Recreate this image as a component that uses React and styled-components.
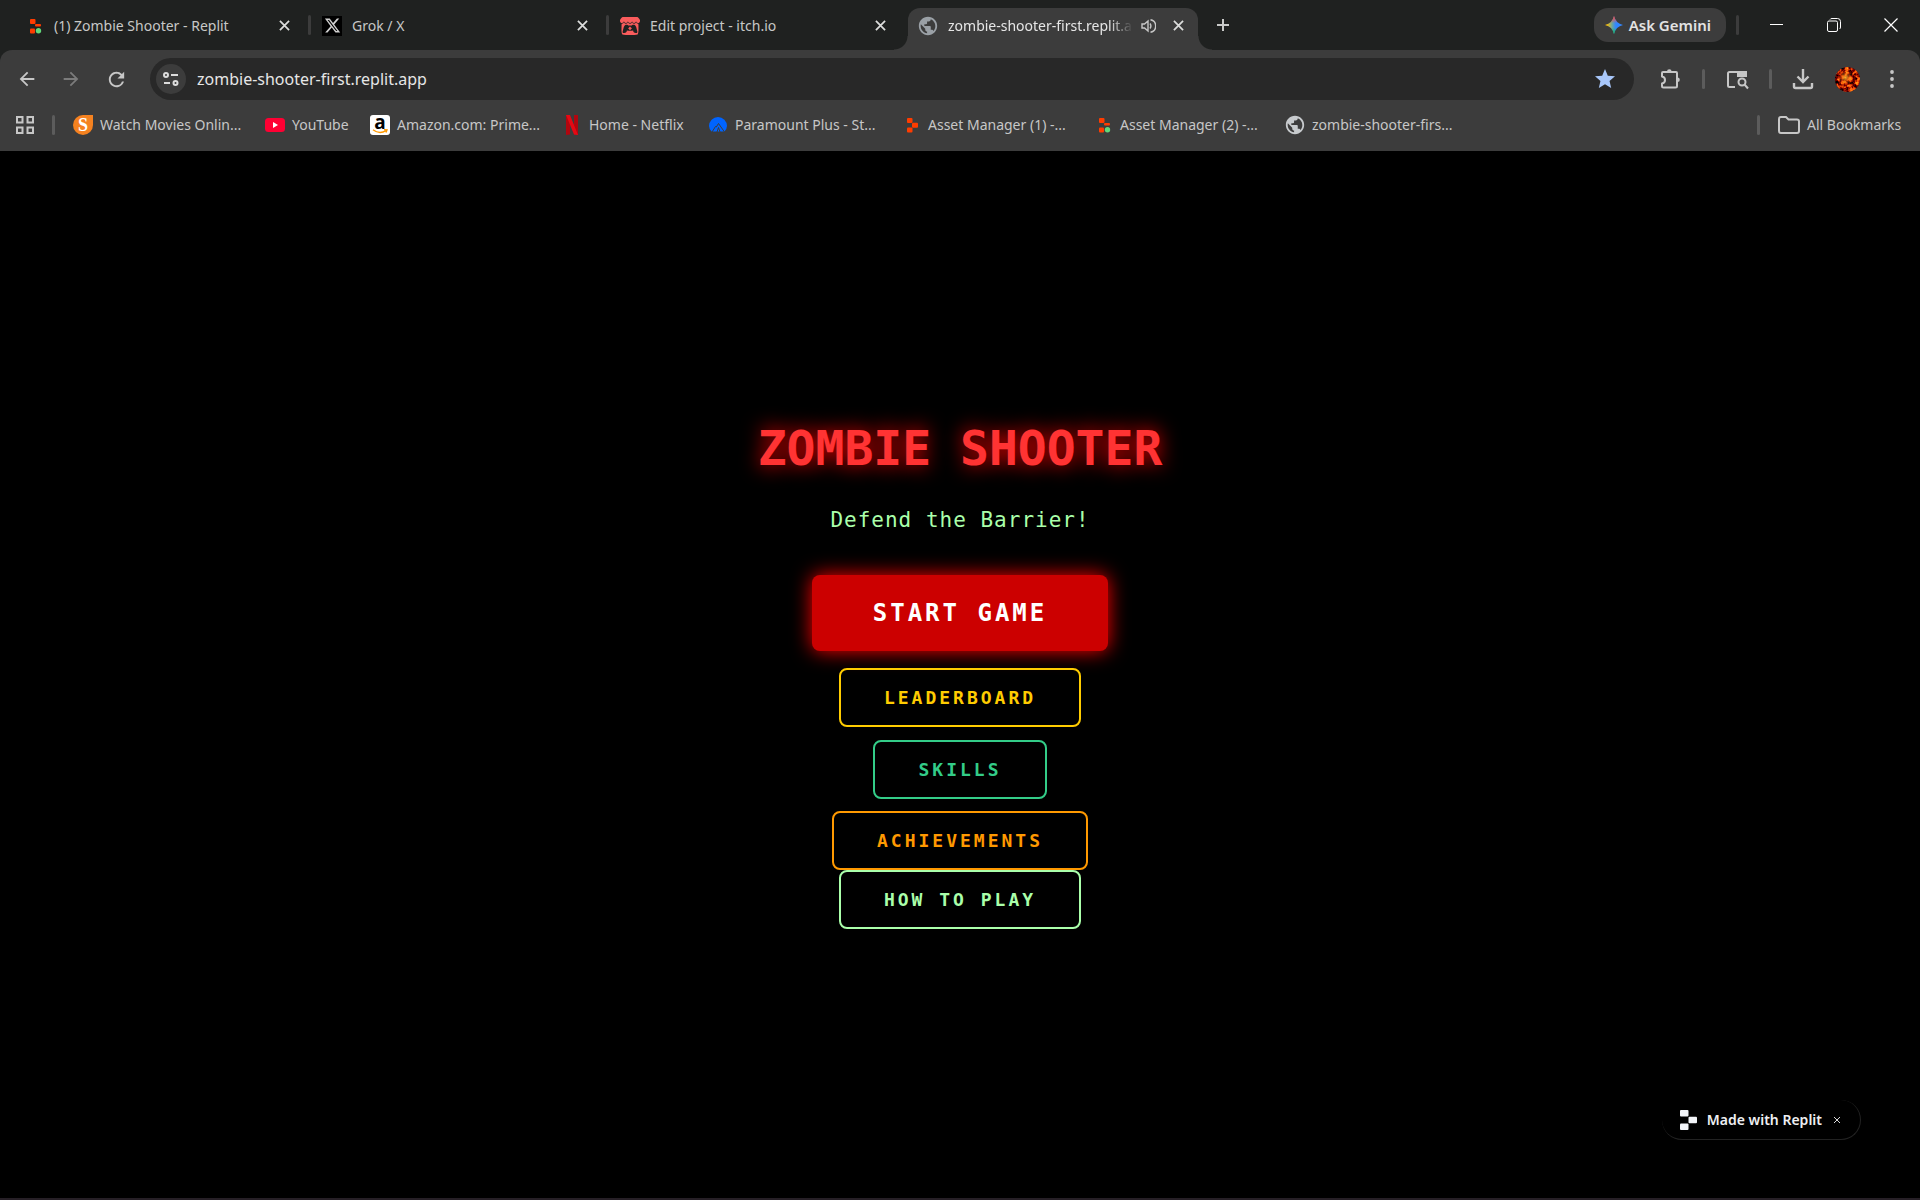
import styled,{createGlobalStyle} from 'styled-components'
import { useState } from 'react'
import { MdArrowBack, MdArrowForward, MdRefresh, MdStar, MdPublic } from 'react-icons/md'
import { SiItchdotio } from 'react-icons/si'
import { FaXTwitter } from 'react-icons/fa6'

export default function App(){
    const [ativa,setAtiva]=useState(3)
    const [url,setUrl]=useState('zombie-shooter-first.replit.app')
    const [selo,setSelo]=useState(true)
    return(
    <Tudo>
        <Global/>
        <Abas>
            {abas.map((a,i)=>
            <Vaga key={a.nome}>
                <Aba $ativa={i==ativa}>
                    <Titulo onClick={()=>setAtiva(i)}>
                        <Quadro>{a.icone}</Quadro>
                        <Nome $corta={a.som}>{a.nome}</Nome>
                    </Titulo>
                    {a.som?<Som/>:<></>}
                    <Botao $w={20} $h={20} aria-label='Close tab'><Fechar/></Botao>
                </Aba>
                {i<ativa-1?<Divisa/>:<></>}
            </Vaga>)}
            <Botao $w={34} $h={34} aria-label='New tab'>
                <svg width='14' height='14' viewBox='0 0 14 14' stroke='#c9cac9' strokeWidth='2'><path d='M7 1v12M1 7h12'/></svg>
            </Botao>
            <Janela>
                <Gemini><Brilho/>Ask Gemini</Gemini>
                <Risca/>
                <Botao $w={56} $h={50} aria-label='Minimize'>
                    <svg width='14' height='14' viewBox='0 0 14 14' stroke='#fff'><path d='M0 6.5h13'/></svg>
                </Botao>
                <Botao $w={57} $h={50} aria-label='Restore'>
                    <svg width='14' height='14' viewBox='0 0 14 14' fill='none' stroke='#fff'><rect x='.5' y='3' width='10' height='10.5' rx='1.5'/><path d='M3 1.5Q3.5.5 5 .5h5.5a3 3 0 0 1 3 3V9q0 1.5-1 2'/></svg>
                </Botao>
                <Botao $w={58} $h={50} aria-label='Close window'>
                    <svg width='14' height='14' viewBox='0 0 14 14' stroke='#fff' strokeWidth='1.2'><path d='M.5.5l13 13M13.5.5l-13 13'/></svg>
                </Botao>
            </Janela>
        </Abas>
        <Barra>
            <Botao $w={44} $h={42} aria-label='Back'><MdArrowBack size={22} color='#c7c7c7'/></Botao>
            <Botao $w={44} $h={42} aria-label='Forward'><MdArrowForward size={22} color='#7b7b7b'/></Botao>
            <Botao $w={46} $h={42} aria-label='Reload'><MdRefresh size={23} color='#c7c7c7'/></Botao>
            <Endereco>
                <Info aria-label='View site information'>
                    <svg width='16' height='16' viewBox='0 0 16 16' fill='none' stroke='#dcdcdc' strokeWidth='2'>
                        <circle cx='3' cy='4' r='2'/><path d='M8 4h7M1 12h6'/><circle cx='12.5' cy='12' r='2'/>
                    </svg>
                </Info>
                <input aria-label='Address' value={url} onChange={(e)=>setUrl(e.target.value)}/>
                <Botao $w={30} $h={30} aria-label='Edit bookmark'><MdStar size={24} color='#a8c7fa'/></Botao>
            </Endereco>
            <Acoes>
                <Botao $w={40} $h={40} aria-label='Extensions'>
                    <svg width='22' height='22' viewBox='0 0 22 22' fill='none' stroke='#c7c7c7' strokeWidth='2' strokeLinejoin='round'>
                        <path d='M4 4h13q1 0 1 1v13q0 1.5-1.500 1.500h-12Q3 19.5 3 18v-2.500q3-.5 3-3.500t-3-3.500V5q0-1 1-1z'/>
                        <path d='M8 3.5a2.300 2.300 0 0 1 4.600 0zM18.500 9.500a2.300 2.300 0 0 1 0 4.600z' fill='#c7c7c7' stroke='none'/>
                    </svg>
                </Botao>
                <Risca $clara/>
                <Botao $w={40} $h={40} aria-label='Side search'>
                    <svg width='24' height='22' viewBox='0 0 24 22' fill='none' stroke='#c7c7c7' strokeWidth='2'>
                        <path d='M10 19H4.5Q3 19 3 17.500v-12Q3 4 4.500 4h15Q21 4 21 5.500V9'/>
                        <path d='M13 4h8v4h-8z' fill='#c7c7c7'/><circle cx='17' cy='14' r='3.5'/><path d='M19.5 16.500l3.500 4'/>
                    </svg>
                </Botao>
                <Risca $clara/>
                <Botao $w={38} $h={40} aria-label='Downloads'>
                    <svg width='22' height='22' viewBox='0 0 22 22' fill='none' stroke='#c7c7c7' strokeWidth='2.4'>
                        <path d='M11 1v13M5.5 8.500L11 14l5.500-5.500M2 15v3.500Q2 20 3.500 20h15q1.500 0 1.500-1.500V15'/>
                    </svg>
                </Botao>
                <Botao $w={50} $h={40} aria-label='Profile'><Avatar/></Botao>
                <Botao $w={40} $h={40} aria-label='Menu'>
                    <svg width='4' height='18' viewBox='0 0 4 18' fill='#c7c7c7'><circle cx='2' cy='2' r='1.9'/><circle cx='2' cy='9' r='1.9'/><circle cx='2' cy='16' r='1.9'/></svg>
                </Botao>
            </Acoes>
        </Barra>
        <Favoritos>
            <Botao $w={20} $h={30} aria-label='Apps'>
                <svg width='18' height='18' viewBox='0 0 18 18' fill='none' stroke='#c7c7c7' strokeWidth='2'>
                    <path d='M1 1h5.500v5.500H1zM11.500 1H17v5.500h-5.500zM1 11.500h5.500V17H1zM11.500 11.500H17V17h-5.500z'/>
                </svg>
            </Botao>
            <Risca $clara/>
            <Lista>
                {favoritos.map(f=>
                <Favorito key={f.nome} href='#' $w={f.largura}>
                    <Quadro>{f.icone}</Quadro>
                    <span>{f.nome}</span>
                </Favorito>)}
            </Lista>
            <Risca $clara/>
            <Favorito href='#' $w={95}>
                <svg width='22' height='18' viewBox='0 0 22 18' fill='none' stroke='#c7c7c7' strokeWidth='2'>
                    <path d='M1 15V3Q1 1 3 1h5l2.500 2.500H19q2 0 2 2V15q0 2-2 2H3q-2 0-2-2z'/>
                </svg>
                <span>All Bookmarks</span>
            </Favorito>
        </Favoritos>
        <Jogo>
            <h1>ZOMBIE SHOOTER</h1>
            <p>Defend the Barrier!</p>
            <Iniciar>START GAME</Iniciar>
            {menus.map(m=><Opcao key={m.nome} $c={m.c} $m={m.m}>{m.nome}</Opcao>)}
            {selo?
            <Selo>
                <a href='#'>
                    <svg width='17' height='20' viewBox='0 0 17 20' fill='#f2f4f8'>
                        <rect width='8.5' height='6.5' rx='1'/><rect x='8.5' y='6.8' width='8.5' height='6.5' rx='1'/><rect y='13.4' width='8.5' height='6.6' rx='1'/>
                    </svg>
                    Made with Replit
                </a>
                <Botao $w={16} $h={20} aria-label='Dismiss' onClick={()=>setSelo(false)}>
                    <svg width='6' height='6' viewBox='0 0 6 6' stroke='#d8d8d8'><path d='M0 0l6 6M6 0L0 6'/></svg>
                </Botao>
            </Selo>:<></>}
        </Jogo>
    </Tudo>
)}

function Fechar(){
    return <svg width='11' height='11' viewBox='0 0 12 12' stroke='#dcdddc' strokeWidth='1.9'><path d='M1 1l10 10M11 1L1 11'/></svg>
}
function Som(){
    return(
    <svg width='15' height='14' viewBox='0 0 15 14' fill='none' stroke='#c7c7c7' strokeWidth='1.4'>
        <path d='M1 5h2.500L7 2v10L3.500 9H1z'/><path d='M9 4.500q1.800 2.500 0 5M9.500.8a6.300 6.300 0 0 1 0 12.400'/>
    </svg>
)}
function Replit({ponto}){
    return(
    <svg width='20' height='20' viewBox='-2 0 20 20' fill='#ff3c00'>
        <rect x='4' y='3' width='5.5' height='5' rx='1'/>
        {ponto?
        <><rect x='9' y='8' width='6' height='2.5' rx='1'/><rect x='4' y='12.5' width='5' height='5' rx='1'/><circle cx='12.5' cy='14.8' r='2.7' fill='#62d87a'/></>:
        <><rect x='9' y='7.7' width='6' height='5' rx='1'/><rect x='4' y='12.5' width='5.5' height='5' rx='1'/></>}
    </svg>
)}
function Youtube(){
    return <svg width='20' height='14' viewBox='0 0 20 14'><rect width='20' height='14' rx='3.5' fill='#ff0033'/><path d='M8 4l5 3-5 3z' fill='#fff'/></svg>
}
function Netflix(){
    return(
    <svg width='20' height='20' viewBox='0 0 20 20'>
        <path d='M4 0h4v19.500l-4 .5zM12 0h4v20l-4-.5z' fill='#b1060f'/>
        <path d='M4 0h4l8 20-4-.5z' fill='#e50914'/>
    </svg>
)}
function Paramount(){
    return(
    <svg width='20' height='20' viewBox='0 0 20 20'>
        <path d='M3.500 16.500Q1 13.500 1 11a9 9 0 0 1 18 0q0 2.500-2.500 5.500z' fill='#0064ff'/>
        <path d='M4 17l3.500-5.500.8.5L10.500 8.500l6 8.500M9 17l1.500-4.500L12 17' fill='none' stroke='#3c3c3c' strokeWidth='1'/>
    </svg>
)}
function Brilho(){
    return(
    <svg width='18' height='18' viewBox='0 0 18 18'>
        <defs>
            <linearGradient id='azul' x1='0' y1='0' x2='1' y2='0'><stop offset='.1' stopColor='#fbbc04'/><stop offset='.4' stopColor='#6aa5a0'/><stop offset='.6' stopColor='#3186ff'/></linearGradient>
            <linearGradient id='topo' x1='0' y1='0' x2='0' y2='1'><stop offset='.05' stopColor='#ff4641'/><stop offset='.4' stopColor='#ff4641' stopOpacity='0'/><stop offset='.65' stopColor='#0ebc5f' stopOpacity='0'/><stop offset='.95' stopColor='#0ebc5f'/></linearGradient>
        </defs>
        {['azul','topo'].map(g=><path key={g} fill={`url(#${g})`} d='M9 0Q10.700 7.300 18 9 10.700 10.700 9 18 7.300 10.700 0 9 7.300 7.300 9 0z'/>)}
    </svg>
)}
function Avatar(){
    return(
    <svg width='25' height='25' viewBox='0 0 25 25'>
        <defs>
            <filter id='fogo' x='0' y='0' width='1' height='1' colorInterpolationFilters='sRGB'>
                <feTurbulence type='fractalNoise' baseFrequency='.28' numOctaves='3' seed='4'/>
                <feColorMatrix values='2.6 0 0 0 -.65  1.8 0 0 0 -.8  .3 0 0 0 -.15  0 0 0 0 1'/>
                <feComposite in2='SourceGraphic' operator='in'/>
            </filter>
            <radialGradient id='centro' cx='.42' cy='.42' r='.32'><stop offset='0' stopColor='#ffc030' stopOpacity='.9'/><stop offset='1' stopColor='#e03000' stopOpacity='0'/></radialGradient>
        </defs>
        <circle cx='12.5' cy='12.5' r='12.5' fill='#b01800' filter='url(#fogo)'/>
        <circle cx='12.5' cy='12.5' r='12.5' fill='url(#centro)'/>
    </svg>
)}

const Global=createGlobalStyle`
body{margin:0;background:#000;}
*{box-sizing:border-box;}
button,input{font-family:inherit;border:none;background:none;padding:0;margin:0;}
button{cursor:pointer;}
a{text-decoration:none;}
svg{display:block;flex-shrink:0;}
`
const Tudo=styled.div`
display:flex;
flex-direction:column;
min-height:100vh;
background:#1f2120;
font-family:'Noto Sans','Open Sans',sans-serif;
`
const Abas=styled.div`
display:flex;
align-items:center;
height:50px;
padding-left:14px;
`
const Vaga=styled.div`
display:flex;
align-items:flex-end;
position:relative;
flex:0 1 298px;
min-width:0;
height:50px;
padding-right:8px;
`
const Divisa=styled.div`
position:absolute;
right:1px;top:15px;
width:3px;height:20px;
border-radius:2px;
background:#3c3c3c;
`
const Aba=styled.div`
display:flex;
align-items:center;
position:relative;
width:100%;
height:42px;
padding:0 10px 7px 10px;
border-radius:12px 12px 0 0;
color:${props=>props.$ativa?'#e6e6e6':'#c7c8c7'};
background:${props=>props.$ativa?'#3c3c3c':'none'};
&::before,&::after{
content:'';
display:${props=>props.$ativa?'block':'none'};
position:absolute;
bottom:0;
width:14px;height:14px;
}
&::before{left:-14px;background:radial-gradient(circle at 0 0,transparent 13px,#3c3c3c 14px);}
&::after{right:-14px;background:radial-gradient(circle at 100% 0,transparent 13px,#3c3c3c 14px);}
`
const Titulo=styled.button`
display:flex;
align-items:center;
flex:1;
min-width:0;
gap:10px;
margin-right:8px;
color:inherit;
font-size:14px;
text-align:left;
`
const Quadro=styled.span`
display:flex;
align-items:center;
justify-content:center;
flex-shrink:0;
width:20px;height:20px;
`
const Nome=styled.span`
flex:1;
overflow:hidden;
white-space:nowrap;
line-height:20px;
mask-image:${props=>props.$corta?'linear-gradient(to left,transparent,#000 24px)':'none'};
`
const Botao=styled.button`
display:flex;
align-items:center;
justify-content:center;
flex-shrink:0;
width:${props=>props.$w}px;
height:${props=>props.$h}px;
${Aba} > svg + &{margin-left:12px;}
`
const Janela=styled.div`
display:flex;
align-items:center;
margin-left:auto;
`
const Gemini=styled.button`
display:flex;
align-items:center;
gap:6px;
height:34px;
padding:0 15px 0 11px;
border-radius:14px;
background:#3c3c3c;
color:#e3e3e3;
font-size:15px;
font-weight:600;
`
const Risca=styled.div`
flex-shrink:0;
width:3px;height:20px;
border-radius:2px;
background:${props=>props.$clara?'#5c5c5c':'#3c3c3c'};
${Janela} > &{margin:0 10px;}
`
const Barra=styled.div`
display:flex;
align-items:center;
height:58px;
padding:0 8px 0 5px;
border-radius:12px 12px 0 0;
background:#3c3c3c;
`
const Endereco=styled.div`
display:flex;
align-items:center;
flex:1;
height:42px;
margin-left:11px;
padding:0 14px 0 6px;
border-radius:21px;
background:#282828;
input{
flex:1;
min-width:0;
margin-left:11px;
outline:none;
color:#e6e6e6;
font-size:16px;
}
`
const Info=styled.button`
display:flex;
align-items:center;
justify-content:center;
width:30px;height:30px;
border-radius:50%;
&&{background:#3c3c3c;}
`
const Acoes=styled.div`
display:flex;
align-items:center;
padding-left:16px;
& > ${Risca}{margin:0 12px;}
`
const Favoritos=styled.div`
display:flex;
align-items:center;
height:43px;
padding:0 18px 9px 15px;
background:#3c3c3c;
& > ${Risca}{margin:0 18px 0 17px;}
`
const Lista=styled.nav`
display:flex;
flex:1;
gap:22px;
min-width:0;
overflow:hidden;
`
const Favorito=styled.a`
display:flex;
align-items:center;
flex-shrink:0;
gap:7px;
color:#c7c7c7;
font-size:14px;
& > span:last-child{width:${props=>props.$w}px;white-space:nowrap;line-height:20px;}
`
const IconeX=styled.span`
display:flex;
align-items:center;
justify-content:center;
width:20px;height:20px;
background:#000;color:#d0d0d0;
`
const IconeS=styled.span`
display:flex;
align-items:center;
justify-content:center;
width:20px;height:20px;
border-radius:10px 0 10px 10px;
background:#f58220;color:#fff;
font:bold 18px 'Liberation Serif',serif;
`
const IconeAmazon=styled.span`
display:flex;
flex-direction:column;
align-items:center;
width:20px;height:20px;
border-radius:3px;
background:#fff;color:#000;
font:bold 19px/14px 'Open Sans',sans-serif;
`
const Jogo=styled.main`
display:flex;
flex-direction:column;
align-items:center;
justify-content:center;
position:relative;
flex:1;
background:#000;
border-bottom:2px solid #261f26;
font-family:'DejaVu Sans Mono','Liberation Mono',monospace;
h1{
margin:0 0 30px 0;
color:#ff3333;
font-size:48px;
line-height:56px;
text-shadow:0 0 20px #ff0000;
}
p{
margin:0 0 41px 0;
color:#aaffaa;
font-size:21px;
letter-spacing:1px;
line-height:28px;
}
`
const Iniciar=styled.button`
height:76px;
margin-bottom:17px;
padding:0 61px;
border-radius:8px;
&&{background:#cc0000;}
color:white;
font-size:24px;
font-weight:bold;
letter-spacing:3px;
box-shadow:0 0 20px #ff0000;
`
const Opcao=styled.button`
&&{border:2px solid #${props=>props.$c};}
height:59px;
margin-bottom:${props=>props.$m}px;
padding:0 43px;
border-radius:8px;
color:#${props=>props.$c};
font-size:18px;
font-weight:bold;
letter-spacing:3px;
`
const Selo=styled.div`
display:flex;
align-items:center;
position:absolute;
right:59px;bottom:58px;
height:40px;
padding:0 15px 0 18px;
border-radius:20px;
border-right:1px solid #222;
border-bottom:1px solid #222;
font-family:'Noto Sans','Open Sans',sans-serif;
a{
display:flex;
align-items:center;
gap:10px;
margin-right:7px;
color:#eeeff2;
font-size:14px;
font-weight:600;
}
`

const abas=[
    {nome:'(1) Zombie Shooter - Replit',icone:<Replit ponto/>},
    {nome:'Grok / X',icone:<IconeX><FaXTwitter size={17}/></IconeX>},
    {nome:'Edit project - itch.io',icone:<SiItchdotio size={20} color='#fa5c5c'/>},
    {nome:'zombie-shooter-first.replit.app',icone:<MdPublic size={22} color='#9aa0a6'/>,som:true},
]
const favoritos=[
    {nome:'Watch Movies Onlin...',largura:143,icone:<IconeS>S</IconeS>},
    {nome:'YouTube',largura:56,icone:<Youtube/>},
    {nome:'Amazon.com: Prime...',largura:143,icone:
        <IconeAmazon>a<svg width='16' height='5' viewBox='0 0 16 5' fill='none' stroke='#ff9900' strokeWidth='1.4'><path d='M1 .8q6.500 5 13 .8M12 .6l3 .3-1 2.600'/></svg></IconeAmazon>},
    {nome:'Home - Netflix',largura:97,icone:<Netflix/>},
    {nome:'Paramount Plus - St...',largura:144,icone:<Paramount/>},
    {nome:'Asset Manager (1) -...',largura:143,icone:<Replit/>},
    {nome:'Asset Manager (2) -...',largura:143,icone:<Replit ponto/>},
    {nome:'zombie-shooter-firs...',largura:143,icone:<MdPublic size={22} color='#c7cacd'/>},
]
const menus=[
    {nome:'LEADERBOARD',c:'ffcc00',m:13},
    {nome:'SKILLS',c:'33cc88',m:12},
    {nome:'ACHIEVEMENTS',c:'ff9900',m:0},
    {nome:'HOW TO PLAY',c:'aaffaa',m:0},
]
